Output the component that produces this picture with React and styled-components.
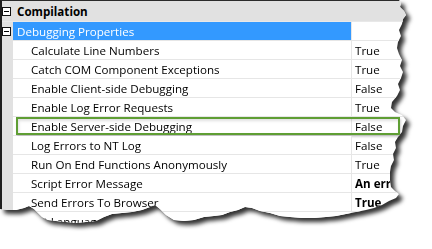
import React from 'react';
import styled, { createGlobalStyle } from 'styled-components';

const GlobalStyle = createGlobalStyle`
  html, body {
    margin: 0;
    padding: 0;
    background: #ffffff;
  }
`;

// torn paper outline, px relative to the sheet
const tear = [
  [0, 0], [399, 0],
  [401, 3], [400, 7], [404, 11], [406, 15], [403, 19], [402, 24], [399, 30], [401, 36],
  [398, 42], [397, 48], [399, 54], [402, 60], [400, 66], [403, 72], [401, 78], [398, 84],
  [400, 90], [397, 96], [392, 102], [391, 108], [395, 112], [402, 115], [406, 120],
  [403, 126], [402, 132], [398, 137], [395, 142], [396, 148], [393, 154], [394, 160],
  [391, 166], [390, 172], [390, 180], [391, 187], [395, 191], [399, 194],
  [396, 198], [389, 201], [382, 205], [374, 208], [366, 210], [356, 212], [346, 214],
  [336, 216], [326, 217], [314, 218], [302, 218], [290, 217], [280, 216], [270, 213],
  [260, 211], [252, 208], [245, 207], [238, 210], [230, 212], [222, 215], [214, 216],
  [204, 217], [194, 220], [184, 221], [174, 220], [166, 215], [160, 209], [155, 205],
  [150, 207], [142, 210], [132, 212], [122, 213], [112, 214], [104, 217], [96, 221],
  [86, 222], [76, 223], [66, 222], [56, 221], [48, 220], [42, 217], [38, 213], [34, 209],
  [29, 206], [24, 208], [16, 210], [8, 210], [0, 209],
];

const tearPath = `polygon(${tear.map(([x, y]) => `${x}px ${y}px`).join(', ')})`;

const rows = [
  { kind: 'category', label: 'Compilation' },
  { kind: 'group', label: 'Debugging Properties' },
  { label: 'Calculate Line Numbers', value: 'True' },
  { label: 'Catch COM Component Exceptions', value: 'True' },
  { label: 'Enable Client-side Debugging', value: 'False' },
  { label: 'Enable Log Error Requests', value: 'True' },
  { label: 'Enable Server-side Debugging', value: 'False', marked: true },
  { label: 'Log Errors to NT Log', value: 'False' },
  { label: 'Run On End Functions Anonymously', value: 'True' },
  { label: 'Script Error Message', value: 'An error', bold: true },
  { label: 'Send Errors To Browser', value: 'True', bold: true },
  { label: 'Script Language', value: 'VBScript', top: true },
];

const PropertyGrid = () => (
  <Shadow>
    <Sheet>
      {rows.map((row, i) => {
        if (row.kind === 'category') {
          return (
            <CategoryRow key={i}>
              <Gutter>
                <Toggle />
              </Gutter>
              <CategoryLabel>{row.label}</CategoryLabel>
            </CategoryRow>
          );
        }
        if (row.kind === 'group') {
          return (
            <Row key={i}>
              <Gutter>
                <Toggle />
              </Gutter>
              <Name selected indent={4}>{row.label}</Name>
              <Value />
            </Row>
          );
        }
        return (
          <Row key={i}>
            <Gutter />
            <Name indent={row.top ? 4 : 18}>{row.label}</Name>
            <Value bold={row.bold}>{row.value}</Value>
            {row.marked && <Marker />}
          </Row>
        );
      })}
    </Sheet>
  </Shadow>
);

export default function App() {
  return (
    <>
      <GlobalStyle />
      <Page>
        <PropertyGrid />
      </Page>
    </>
  );
}

// Styled Components
const Page = styled.div`
  width: 432px;
  height: 249px;
  overflow: hidden;
  background: #ffffff;
`;

const Shadow = styled.div`
  width: 412px;
  filter: drop-shadow(4px 4px 2px rgba(0, 0, 0, 0.8));
`;

const Sheet = styled.div`
  width: 412px;
  height: 232px;
  box-sizing: border-box;
  background: #ffffff;
  border-top: 1px solid #2b2b2b;
  border-left: 2px solid #1e1e1e;
  clip-path: ${tearPath};
  font-family: 'Open Sans', 'Noto Sans', sans-serif;
  font-size: 11.6px;
  color: #000000;
`;

const Row = styled.div`
  position: relative;
  display: flex;
  height: 19px;
`;

const CategoryRow = styled.div`
  display: flex;
  height: 21px;
  box-sizing: border-box;
  background: #e1e1e1;
  border-bottom: 1px solid #e8e8e8;
`;

const Gutter = styled.div`
  width: 11px;
  flex: none;
  display: flex;
  align-items: center;
  background: #e1e1e1;
`;

const Toggle = styled.span`
  position: relative;
  width: 9px;
  height: 9px;
  box-sizing: border-box;
  border: 1px solid #111111;
  background: #ffffff;
  &::after {
    content: '';
    position: absolute;
    left: 1px;
    top: 3px;
    width: 5px;
    height: 1px;
    background: #000000;
  }
`;

const CategoryLabel = styled.div`
  flex: 1;
  display: flex;
  align-items: center;
  padding-left: 4px;
  font-weight: 700;
`;

const Name = styled.div`
  width: 338px;
  flex: none;
  display: flex;
  align-items: center;
  box-sizing: border-box;
  padding-left: ${({ indent }) => indent}px;
  border-bottom: 1px solid #e6e6e6;
  white-space: nowrap;
  overflow: hidden;
  background: ${({ selected }) => (selected ? '#3399ff' : '#ffffff')};
  color: ${({ selected }) => (selected ? '#ffffff' : '#000000')};
`;

const Value = styled.div`
  flex: 1;
  display: flex;
  align-items: center;
  box-sizing: border-box;
  padding-left: 3px;
  border-left: 1px solid #e6e6e6;
  border-bottom: 1px solid #e6e6e6;
  white-space: nowrap;
  overflow: hidden;
  font-weight: ${({ bold }) => (bold ? 700 : 400)};
`;

const Marker = styled.div`
  position: absolute;
  left: 14px;
  top: 0;
  width: 384px;
  height: 18px;
  box-sizing: border-box;
  border: 2px solid #5f9e34;
  box-shadow: inset 1px 2px 3px rgba(0, 0, 0, 0.12), 1px 2px 2px rgba(0, 0, 0, 0.18);
  pointer-events: none;
`;
